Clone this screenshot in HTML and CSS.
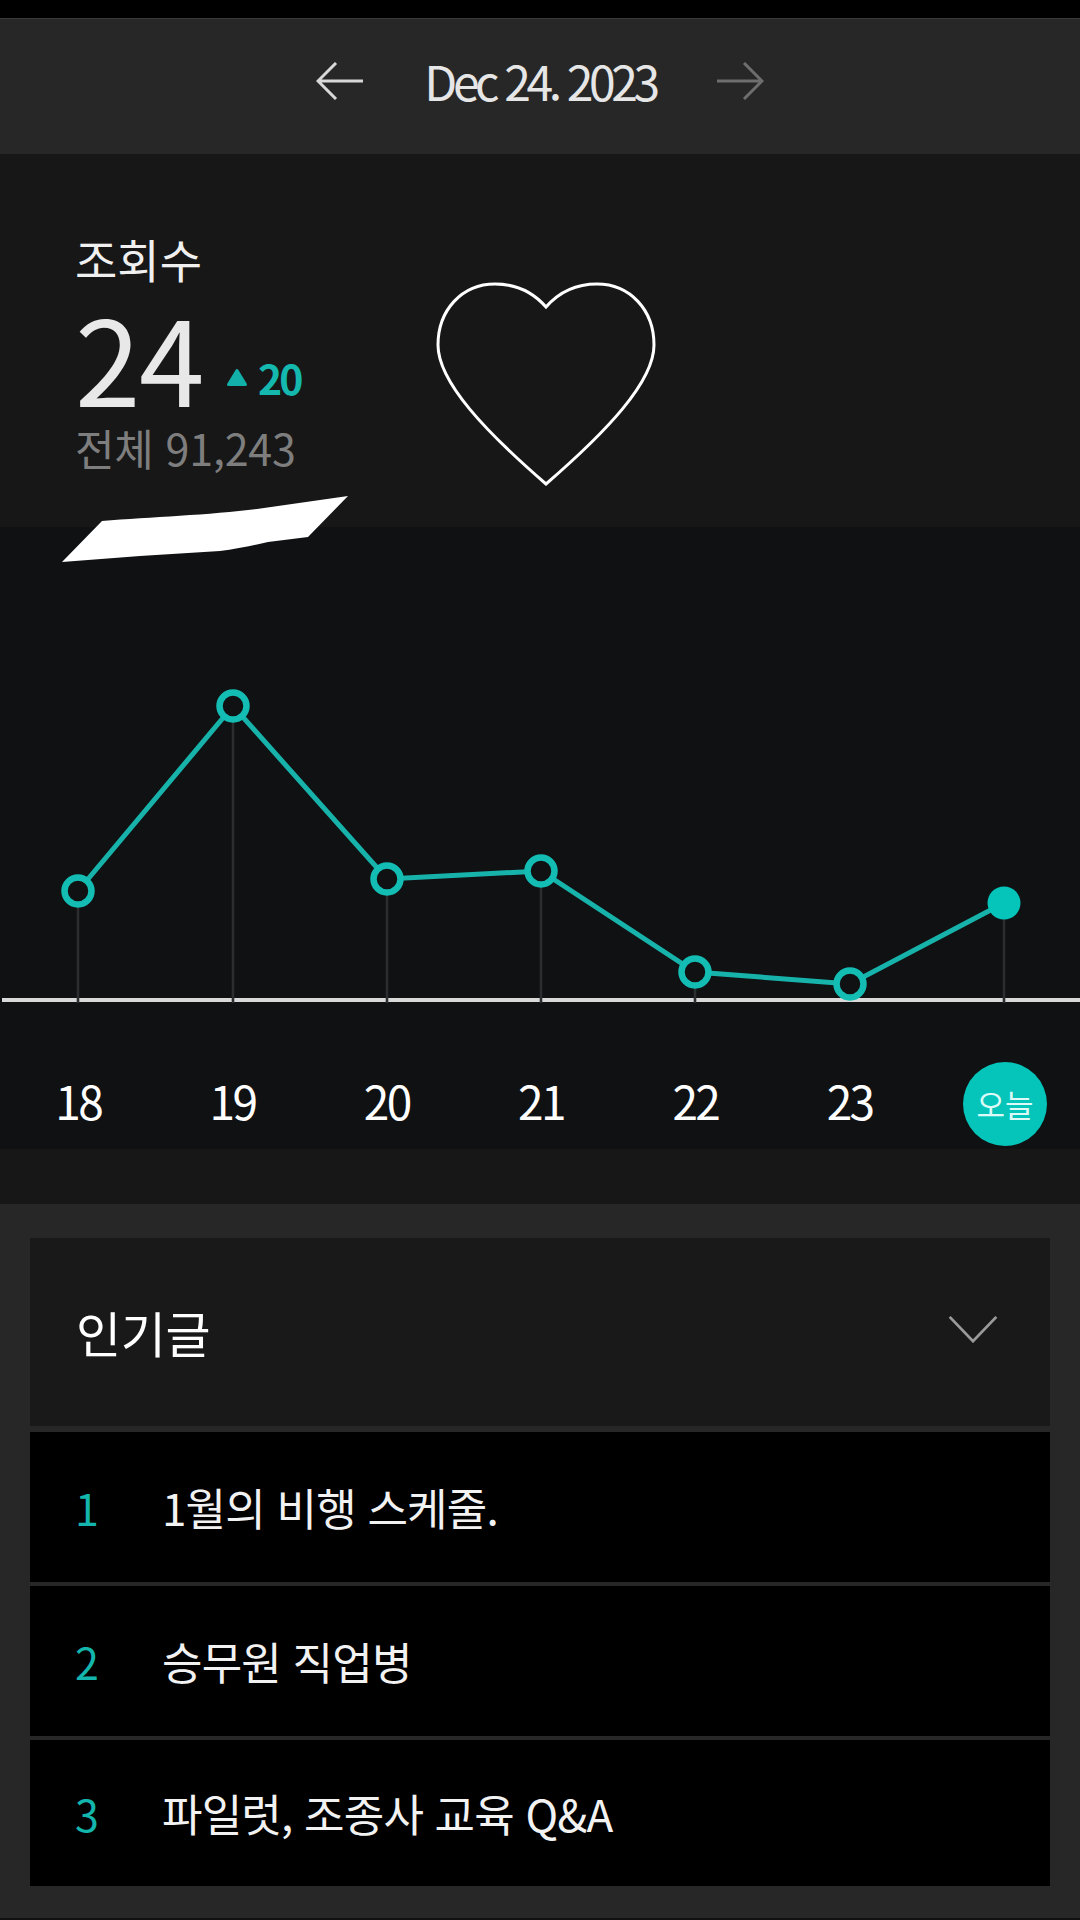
FILE: index.html
```html
<!DOCTYPE html>
<html lang="ko">
<head>
<meta charset="utf-8">
<title>통계</title>
<link rel="stylesheet" href="styles.css">
</head>
<body>
<div class="page">
  <div class="status"></div>
  <header class="datebar">
    <svg class="arrow" viewBox="0 0 48 38" width="48" height="38"><path d="M47 19H2M20 1L2 19l18 18" fill="none" stroke="#d8d8d8" stroke-width="3"/></svg>
    <span class="date">Dec 24. 2023</span>
    <svg class="arrow" viewBox="0 0 48 38" width="48" height="38"><path d="M1 19h45M28 1l18 18-18 18" fill="none" stroke="#6e6e6e" stroke-width="3"/></svg>
  </header>

  <section class="stats">
    <div class="stats-title">조회수</div>
    <div class="stats-main">
      <span class="stats-value">24</span>
      <svg class="delta-icon" viewBox="0 0 22 18" width="22" height="18"><path d="M11 2.5L19.5 16.5H2.5z" fill="#12b0a8" stroke="#12b0a8" stroke-width="3" stroke-linejoin="round"/></svg>
      <span class="delta">20</span>
    </div>
    <div class="stats-total">전체 91,243</div>
    <svg class="heart" viewBox="0 0 220 206" width="220" height="206"><path d="M110 25C96 9 78 2 59 2 26 2 2 28 2 63 2 100 50 150 110 202 170 150 218 100 218 63 218 28 194 2 161 2 142 2 124 9 110 25z" fill="none" stroke="#fff" stroke-width="3"/></svg>
    <svg class="smear" viewBox="0 0 300 70" width="300" height="70"><path d="M2 66L42 25C90 21 150 19 197 13L288 0 248 41 208 46C190 50 175 53 160 55L80 60z" fill="#fff"/></svg>
  </section>

  <section class="chart">
    <svg class="plot" viewBox="0 0 1080 476" width="1080" height="476">
      <path d="M2 473H1080" stroke="#d9d9d9" stroke-width="4"/>
      <g stroke="#2c2d2f" stroke-width="2.6">
        <path d="M78 364v112M233 179v297M387 352v124M541 344v132M695 445v31M1004 376v100"/>
      </g>
      <path d="M78 364L233 179 387 352 541 344 695 445 850 457 1004 376" fill="none" stroke="#17b3ab" stroke-width="5"/>
      <g fill="#0f1113" stroke="#14bdb4" stroke-width="6.5">
        <circle cx="78" cy="364" r="13.5"/>
        <circle cx="233" cy="179" r="13.5"/>
        <circle cx="387" cy="352" r="13.5"/>
        <circle cx="541" cy="344" r="13.5"/>
        <circle cx="695" cy="445" r="13.5"/>
        <circle cx="850" cy="457" r="13.5"/>
      </g>
      <circle cx="1004" cy="376" r="16.5" fill="#05c4b9"/>
    </svg>
    <div class="days">
      <span class="day day-num">18</span>
      <span class="day day-num">19</span>
      <span class="day day-num">20</span>
      <span class="day day-num">21</span>
      <span class="day day-num">22</span>
      <span class="day day-num">23</span>
      <span class="day"><span class="today">오늘</span></span>
    </div>
  </section>

  <div class="spacer"></div>

  <section class="popular">
    <div class="pop-head">
      <h2 class="pop-title">인기글</h2>
      <svg class="chev" viewBox="0 0 52 30" width="50" height="28"><path d="M1 2l25 26L51 2" fill="none" stroke="#9a9a9a" stroke-width="3"/></svg>
    </div>
    <ol class="pop-list">
      <li class="pop-item"><span class="rank">1</span><span class="pop-text">1월의 비행 스케줄.</span></li>
      <li class="pop-item"><span class="rank">2</span><span class="pop-text">승무원 직업병</span></li>
      <li class="pop-item"><span class="rank">3</span><span class="pop-text">파일럿, 조종사 교육 Q&amp;A</span></li>
    </ol>
  </section>
</div>
</body>
</html>
```

FILE: styles.css
```css
* { box-sizing: border-box; }
html, body { margin: 0; padding: 0; background: #000; }
body { font-family: "Noto Sans CJK KR", "Noto Sans", sans-serif; }
.page { width: 1080px; height: 1920px; overflow: hidden; display: flex; flex-direction: column; }

.status { height: 18px; background: #000; flex: none; }

.datebar {
  height: 136px; flex: none; background: #272727; border-top: 1px solid #3a3a3a;
  display: flex; align-items: flex-start; justify-content: center; gap: 60px; padding-top: 43px;
}
.arrow { flex: none; }
.date {
  font-size: 48px; font-weight: 400; line-height: 36px; color: #e6e6e6;
  letter-spacing: -4.4px; white-space: nowrap; width: 232px; text-align: center;
}

.stats { position: relative; height: 373px; flex: none; background: #171717; padding: 79px 0 0 75px; }
.stats-title { font-size: 46px; line-height: 50px; font-weight: 400; color: #f0f0f0; letter-spacing: 0; }
.stats-main { display: flex; align-items: flex-start; height: 118px; margin-top: 14px; }
.stats-value { font-size: 118px; line-height: 118px; font-weight: 400; color: #e8e8e8; letter-spacing: -1.5px; }
.delta-icon { margin: 71px 0 0 23px; }
.delta { font-size: 41px; line-height: 44px; font-weight: 700; color: #14b8ae; letter-spacing: -2.8px; margin: 58px 0 0 10px; }
.stats-total { font-size: 43px; line-height: 50px; font-weight: 400; color: #7e7e7e; letter-spacing: -0.2px; margin-top: 7px; }
.heart { position: absolute; left: 436px; top: 128px; }
.smear { position: absolute; left: 60px; top: 342px; z-index: 2; filter: blur(0.7px); }

.chart { height: 622px; flex: none; background: #0f1113; display: flex; flex-direction: column; }
.plot { display: block; flex: none; }
.days { display: grid; grid-template-columns: repeat(7, 154.3px); padding-left: 1px; height: 146px; padding-top: 71px; }
.day { font-size: 46px; line-height: 60px; height: 60px; font-weight: 400; color: #fff; letter-spacing: -2.6px; display: flex; justify-content: center; align-items: center; }
.day-num { padding-bottom: 8px; }
.today {
  flex: none; width: 84px; height: 84px; margin-left: 2px; border-radius: 50%; background: #05c4b9;
  font-size: 31px; font-weight: 400; color: #dcfbf8; letter-spacing: 0;
  display: flex; align-items: center; justify-content: center;
}

.spacer { height: 55px; flex: none; background: #171717; }

.popular { flex: 1; background: #272727; padding: 34px 30px 0; border-bottom: 2px solid #111; }
.pop-head { height: 188px; background: #191919; display: flex; align-items: center; justify-content: space-between; padding: 0 52px 0 46px; }
.pop-title { margin: 0; font-size: 49px; font-weight: 400; color: #fff; letter-spacing: -0.3px; line-height: 60px; }
.chev { margin-bottom: 6px; }
.pop-list { list-style: none; margin: 6px 0 0; padding: 0; display: flex; flex-direction: column; gap: 4px; }
.pop-item { height: 150px; background: #000; display: flex; align-items: center; padding-left: 45px; }
.pop-item:last-child { height: 146px; }
.rank { width: 87px; flex: none; font-size: 43px; font-weight: 400; color: #14b5ac; }
.pop-text { font-size: 44px; font-weight: 400; color: #f2f2f2; letter-spacing: -0.8px; white-space: nowrap; }
```
